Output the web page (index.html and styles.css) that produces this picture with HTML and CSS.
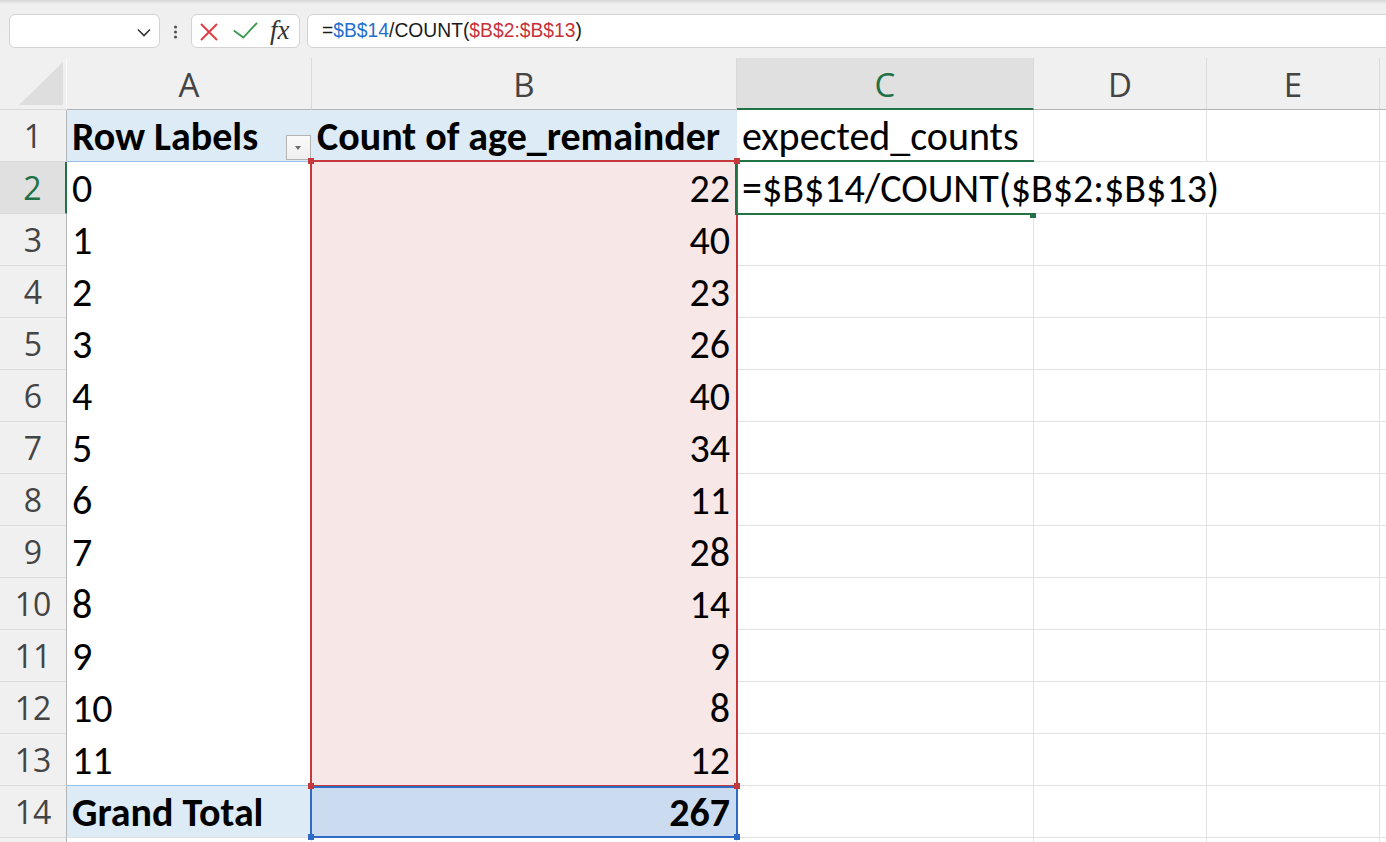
FILE: index.html
```html
<!DOCTYPE html>
<html lang="en">
<head>
<meta charset="utf-8">
<title>Sheet</title>
<link rel="stylesheet" href="styles.css">
</head>
<body>
<div class="app">
  <div class="fbar">
    <div class="namebox">
      <svg class="chev" width="14" height="9" viewBox="0 0 14 9"><path d="M1 1.5 L7 7.5 L13 1.5" fill="none" stroke="#333" stroke-width="1.6"/></svg>
    </div>
    <svg class="dots" width="5" height="34" viewBox="0 0 5 34"><circle cx="2.5" cy="13" r="1.6"/><circle cx="2.5" cy="18" r="1.6"/><circle cx="2.5" cy="23" r="1.6"/></svg>
    <div class="fxbox">
      <svg class="ic-x" width="18" height="18" viewBox="0 0 18 18"><path d="M1 1 L17 17 M17 1 L1 17" stroke="#e0393f" stroke-width="1.9" fill="none"/></svg>
      <svg class="ic-ok" width="25" height="17" viewBox="0 0 25 17"><path d="M0.8 8.6 L10.3 15.6 L24 0.8" stroke="#3a9a4e" stroke-width="1.9" fill="none"/></svg>
      <span class="fx">fx</span>
    </div>
    <div class="formula">=<span class="ref-b">$B$14</span>/COUNT(<span class="ref-r">$B$2:$B$13</span>)</div>
  </div>

  <div class="sheet">
    <div class="corner"><svg width="44" height="44" viewBox="0 0 44 44"><polygon points="44,0 44,43 0,43" fill="#dedede"/></svg></div>
    <div class="ch">A</div>
    <div class="ch">B</div>
    <div class="ch sel">C</div>
    <div class="ch">D</div>
    <div class="ch">E</div>
    <div class="ch"></div>

    <div class="rh">1</div>
    <div class="c pv-h">Row Labels<span class="dd"></span></div>
    <div class="c pv-h">Count of age_remainder</div>
    <div class="c">expected_counts</div>
    <div class="c"></div><div class="c"></div><div class="c"></div>

    <div class="rh sel">2</div>
    <div class="c pv-a">0</div>
    <div class="c pv-b">22</div>
    <div class="c edit">=$B$14/COUNT($B$2:$B$13)</div>
    <div class="c edit"></div><div class="c"></div><div class="c"></div>

    <div class="rh">3</div>
    <div class="c pv-a">1</div>
    <div class="c pv-b">40</div>
    <div class="c"></div><div class="c"></div><div class="c"></div><div class="c"></div>

    <div class="rh">4</div>
    <div class="c pv-a">2</div>
    <div class="c pv-b">23</div>
    <div class="c"></div><div class="c"></div><div class="c"></div><div class="c"></div>

    <div class="rh">5</div>
    <div class="c pv-a">3</div>
    <div class="c pv-b">26</div>
    <div class="c"></div><div class="c"></div><div class="c"></div><div class="c"></div>

    <div class="rh">6</div>
    <div class="c pv-a">4</div>
    <div class="c pv-b">40</div>
    <div class="c"></div><div class="c"></div><div class="c"></div><div class="c"></div>

    <div class="rh">7</div>
    <div class="c pv-a">5</div>
    <div class="c pv-b">34</div>
    <div class="c"></div><div class="c"></div><div class="c"></div><div class="c"></div>

    <div class="rh">8</div>
    <div class="c pv-a">6</div>
    <div class="c pv-b">11</div>
    <div class="c"></div><div class="c"></div><div class="c"></div><div class="c"></div>

    <div class="rh">9</div>
    <div class="c pv-a">7</div>
    <div class="c pv-b">28</div>
    <div class="c"></div><div class="c"></div><div class="c"></div><div class="c"></div>

    <div class="rh">10</div>
    <div class="c pv-a">8</div>
    <div class="c pv-b">14</div>
    <div class="c"></div><div class="c"></div><div class="c"></div><div class="c"></div>

    <div class="rh">11</div>
    <div class="c pv-a">9</div>
    <div class="c pv-b">9</div>
    <div class="c"></div><div class="c"></div><div class="c"></div><div class="c"></div>

    <div class="rh">12</div>
    <div class="c pv-a">10</div>
    <div class="c pv-b">8</div>
    <div class="c"></div><div class="c"></div><div class="c"></div><div class="c"></div>

    <div class="rh">13</div>
    <div class="c pv-a last">11</div>
    <div class="c pv-b">12</div>
    <div class="c"></div><div class="c"></div><div class="c"></div><div class="c"></div>

    <div class="rh">14</div>
    <div class="c pv-t">Grand Total</div>
    <div class="c pv-tb">267</div>
    <div class="c"></div><div class="c"></div><div class="c"></div><div class="c"></div>

    <div class="rh"></div>
    <div class="c"></div><div class="c"></div><div class="c"></div><div class="c"></div><div class="c"></div><div class="c"></div>

    <div class="rng rng-red"></div>
    <div class="rng rng-blue"></div>
    <div class="active"></div>
    <span class="hd red h-tl"></span>
    <span class="hd red h-tr"></span>
    <span class="hd red h-bl"></span>
    <span class="hd red h-br"></span>
    <span class="hd blue h-bbl"></span>
    <span class="hd blue h-bbr"></span>
    <span class="hd green h-fill"></span>
  </div>
</div>
</body>
</html>
```

FILE: styles.css
```css
* { box-sizing: border-box; margin: 0; padding: 0; }
html, body { width: 1386px; height: 842px; overflow: hidden; background: #fff; }
body { font-family: "Carlito", "Lato", sans-serif; color: #000; }

.app { display: flex; flex-direction: column; height: 842px; }

/* formula bar */
.fbar {
  flex: none; height: 58px; display: flex; align-items: flex-start;
  padding: 14px 0 0 9px;
  background: linear-gradient(to bottom, #d4d4d4 0, #efefef 4px, #f0f0f0 100%);
  overflow: hidden;
}
.namebox {
  width: 151px; height: 34px; background: #fff; border: 1px solid #d3d3d3; border-radius: 6px;
  display: flex; align-items: center; justify-content: flex-end; padding-right: 8px;
}
.chev { margin-top: 3px; }
.dots { margin-left: 13px; fill: #555; }
.fxbox {
  margin-left: 13px; width: 109px; height: 34px; background: #fff; border: 1px solid #d3d3d3; border-radius: 6px;
  display: flex; align-items: center; padding-left: 8px;
}
.ic-x { margin-top: 2px; }
.ic-ok { margin-left: 15px; margin-top: -1px; }
.fx { margin-left: 12px; font-family: "Liberation Serif", serif; font-style: italic; font-size: 27px; color: #333; line-height: 1; margin-top: -2px; }
.formula {
  flex: 1; margin-left: 7px; margin-right: -20px; height: 34px; background: #fff; border: 1px solid #d3d3d3; border-radius: 6px;
  padding-left: 14px; font-family: "Liberation Sans", sans-serif; font-size: 19.3px; line-height: 32px; color: #1b1b1b; white-space: nowrap;
}
.ref-b { color: #1f6fce; }
.ref-r { color: #c8313a; }

/* sheet */
.sheet {
  position: relative; flex: 1; overflow: hidden;
  display: grid;
  grid-template-columns: 67px 245px 425px 297px 173px 173px 1fr;
  grid-auto-rows: 52px;
}
.corner {
  background: #f0f0f0; border-right: 1px solid #f9f9f9; border-bottom: 1px solid #d8d8d8;
  display: flex; justify-content: flex-end; padding: 4px 3px 0 0;
}
.ch {
  background: #f0f0f0; border-right: 1px solid #dadada; border-bottom: 1px solid #b5b5b5;
  display: flex; align-items: center; justify-content: center; padding-top: 3px;
  font-family: "Open Sans", sans-serif; font-size: 33px; color: #444; line-height: 1.36;
}
.ch.sel { background: #e0e0e0; color: #1e7145; border-bottom: 2px solid #217346; padding-top: 4px; }
.rh {
  background: #f0f0f0; border-right: 1px solid #b5b5b5; border-bottom: 1px solid #dadada;
  display: flex; align-items: center; justify-content: center;
  font-family: "Open Sans", sans-serif; font-size: 32px; color: #444; line-height: 1.36;
}
.rh.sel { background: #e0e0e0; color: #1e7145; border-right: 2px solid #217346; }

.c {
  border-right: 1px solid #e1e1e1; border-bottom: 1px solid #e1e1e1;
  display: flex; align-items: center; padding: 2px 6px 0 5px;
  font-size: 40px; line-height: 1.2; white-space: nowrap;
}
.pv-h { position: relative; background: #ddebf7; font-weight: 700; border-right-color: transparent; border-bottom-color: #9bc2e6; }
.pv-a { border-color: transparent; }
.pv-a.last { border-bottom-color: #9bc2e6; }
.pv-b { background: #f8e7e7; border-color: transparent; justify-content: flex-end; }
.pv-t { background: #ddebf7; font-weight: 700; border-right-color: transparent; }
.pv-tb { background: #cbdcf1; font-weight: 700; justify-content: flex-end; border-color: transparent; }
.edit { border-right-color: transparent; overflow: visible; }

.dd {
  position: absolute; right: 0; bottom: 1px; width: 25px; height: 25px;
  border: 1px solid #b4b4b4; background: linear-gradient(#fafafa, #efefef);
}
.dd::after {
  content: ""; position: absolute; left: 8px; top: 10px;
  border-left: 3.5px solid transparent; border-right: 3.5px solid transparent; border-top: 4px solid #6b6b6b;
}

/* overlays */
.rng { position: absolute; border: 2px solid; pointer-events: none; }
.rng-red { left: 310px; top: 102px; width: 428px; height: 627px; border-color: #c7383d; }
.rng-blue { left: 310px; top: 728px; width: 428px; height: 52px; border-color: #2f6bc4; }
.active {
  position: absolute; left: 735px; top: 102px; width: 299px; height: 55px;
  border: 2px solid #217346; border-right: none;
}
.hd { position: absolute; width: 6px; height: 6px; }
.hd.red { background: #c7383d; }
.hd.blue { background: #2f6bc4; }
.hd.green { background: #217346; width: 6px; height: 5px; }
.h-tl { left: 308px; top: 100px; }
.h-tr { left: 734px; top: 100px; }
.h-bl { left: 308px; top: 725px; }
.h-br { left: 734px; top: 725px; }
.h-bbl { left: 308px; top: 776px; }
.h-bbr { left: 734px; top: 776px; }
.h-fill { left: 1030px; top: 155px; }
```
